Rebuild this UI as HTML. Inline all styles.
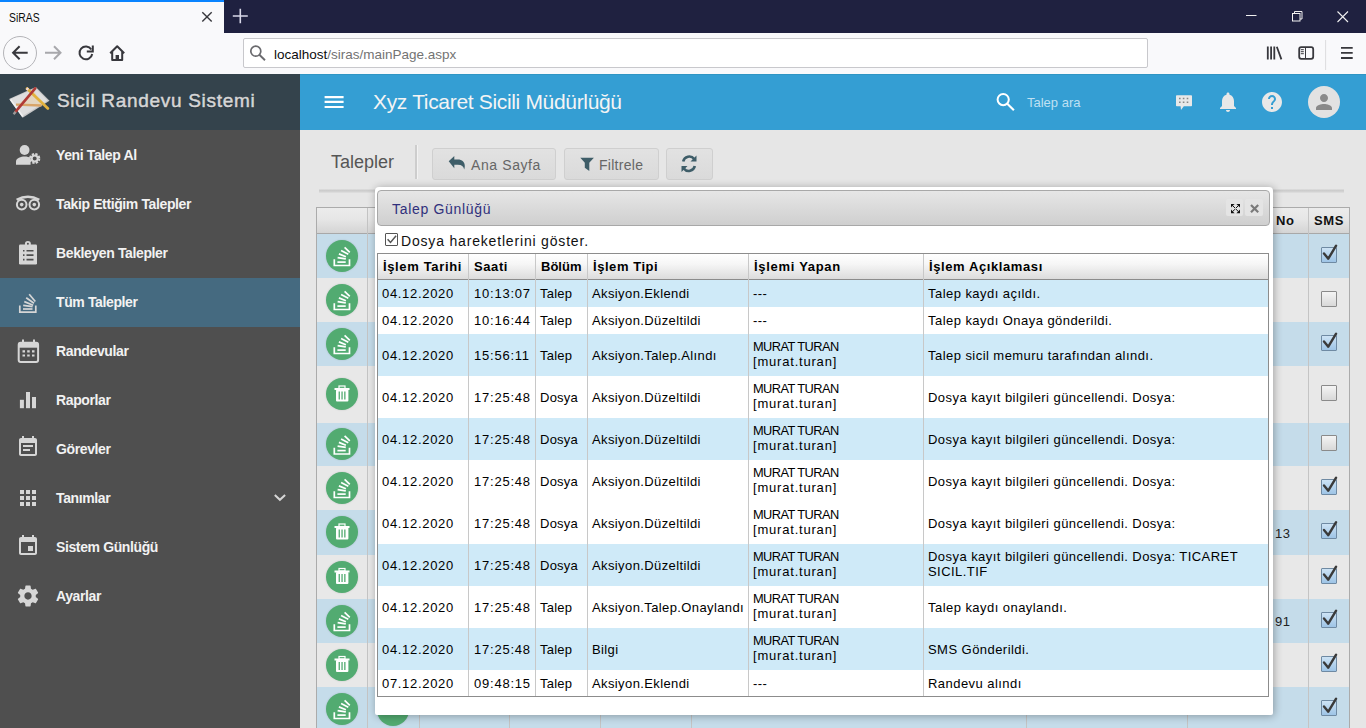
<!DOCTYPE html>
<html><head><meta charset="utf-8">
<style>
*{box-sizing:border-box;margin:0;padding:0}
html,body{width:1366px;height:728px;overflow:hidden;background:#e6e6e6;font-family:"Liberation Sans",sans-serif}
.a{position:absolute}
svg{position:absolute;display:block;overflow:visible}
.nw{white-space:nowrap}
#tabbar{left:0;top:0;width:1366px;height:33px;background:#1f2140}
#tab{left:0;top:0;width:224px;height:33px;background:#f9f9fb}
#tabline{left:0;top:0;width:224px;height:2px;background:#0a84ff}
#toolbar{left:0;top:33px;width:1366px;height:41px;background:#f9f9fb}
#url{left:243px;top:38px;width:905px;height:30px;background:#fff;border:1px solid #c8c8cc;border-radius:2px}
#sbhead{left:0;top:74px;width:300px;height:56px;background:#34434c}
#sb{left:0;top:130px;width:300px;height:598px;background:#4f4f4f}
.mi{position:absolute;left:56px;font:bold 14px "Liberation Sans",sans-serif;color:#f2f2f2;letter-spacing:-0.38px;white-space:nowrap}
#top{left:300px;top:74px;width:1066px;height:56px;background:#349ed3;border-top:1px solid #2f95c4}
.btn{position:absolute;top:148px;height:32px;background:linear-gradient(#e2e2e2,#dadada);border:1px solid #cfcfcf;border-radius:3px}
.bt{position:absolute;top:157px;font-size:14px;color:#666;white-space:nowrap}
.col{position:absolute;width:1px;background:#c4c4c4}
.gc{position:absolute;width:32px;height:32px;border-radius:50%;background:#52ab71;box-shadow:0 0 2px rgba(0,0,0,.15)}
.cb{position:absolute;width:16px;height:16px;border:1px solid #8a8a8a;background:linear-gradient(#f4f4f4,#d8d8d8);border-radius:1px}
.cb.on{background:linear-gradient(#cde3f5,#9ec4e6);border-color:#6f8aa3}
#dlg{left:375px;top:187px;width:898px;height:528px;background:#fff;border-radius:4px 4px 2px 2px;box-shadow:1px 1px 8px rgba(0,0,0,.32)}
#dtitle{left:377px;top:190px;width:893px;height:36px;border:1px solid #a8a8a8;border-radius:4px;background:linear-gradient(#e6e6e6,#cfcfcf)}
.dc{position:absolute;display:flex;align-items:center;font-size:13px;line-height:15px;color:#000;letter-spacing:0.4px;white-space:nowrap}
.dh{position:absolute;top:254px;height:25px;display:flex;align-items:center;font:bold 13px "Liberation Sans",sans-serif;color:#000;letter-spacing:0.55px;white-space:nowrap}
</style></head><body>
<div id="tabbar" class="a"></div>
<div id="tab" class="a"></div>
<div id="tabline" class="a"></div>
<div class="a nw" style="left:9.3px;top:10.8px;font-size:12.5px;letter-spacing:0;color:#0c0c0d;transform:scaleX(0.83);transform-origin:0 0">SiRAS</div>
<div id="toolbar" class="a"></div>
<div id="url" class="a"></div>
<div class="a nw" style="left:274px;top:47px;font-size:13.5px;color:#0c0c0d">localhost<span style="color:#737373">/siras/mainPage.aspx</span></div>
<div id="sbhead" class="a"></div>
<div id="sb" class="a"></div>
<div class="a nw" style="left:57px;top:90px;font-size:19px;letter-spacing:0.7px;color:#d6d6d6;-webkit-text-stroke:0.5px #d6d6d6;text-shadow:0 1px 1px rgba(0,0,0,.35)">Sicil Randevu Sistemi</div>
<div class="a" style="left:0;top:278px;width:300px;height:49px;background:#456a80"></div>
<div class="mi" style="top:147px">Yeni Talep Al</div>
<div class="mi" style="top:196px">Takip Ettiğim Talepler</div>
<div class="mi" style="top:245px">Bekleyen Talepler</div>
<div class="mi" style="top:294px">Tüm Talepler</div>
<div class="mi" style="top:343px">Randevular</div>
<div class="mi" style="top:392px">Raporlar</div>
<div class="mi" style="top:441px">Görevler</div>
<div class="mi" style="top:490px">Tanımlar</div>
<div class="mi" style="top:539px">Sistem Günlüğü</div>
<div class="mi" style="top:588px">Ayarlar</div>
<div id="top" class="a"></div>
<div class="a nw" style="left:373px;top:90px;font-size:21px;letter-spacing:-0.33px;color:#f4f4f4">Xyz Ticaret Sicili Müdürlüğü</div>
<div class="a nw" style="left:1027px;top:95px;font-size:13px;color:#bfe0f2">Talep ara</div>
<div class="a" style="left:1308px;top:86px;width:32px;height:32px;border-radius:50%;background:#e2e2e2"></div>
<div class="a nw" style="left:331px;top:152px;font-size:18px;color:#555">Talepler</div>
<div class="a" style="left:415px;top:145px;width:3px;height:34px;background:#cdcdcd;border-right:1px solid #f2f2f2"></div>
<div class="btn" style="left:432px;width:124px"></div>
<div class="btn" style="left:564px;width:95px"></div>
<div class="btn" style="left:666px;width:47px"></div>
<div class="bt" style="left:471px;letter-spacing:0.6px">Ana Sayfa</div>
<div class="bt" style="left:599px;letter-spacing:0.28px">Filtrele</div>
<div class="a" style="left:319px;top:189px;width:1025px;height:4px;background:linear-gradient(#e0e0e0,#cbcbcb 40%,#d6d6d6 75%,#e2e2e2)"></div>
<div class="a" style="left:316px;top:207px;width:1034px;height:530px;border:1px solid #ababab;background:#e8e8e8"></div>
<div class="a" style="left:317px;top:208px;width:1032px;height:26px;background:linear-gradient(#ececec 0%,#e6e6e6 45%,#d4d4d4 100%);border-bottom:1px solid #a8a8a8"></div>
<div class="a" style="left:317px;top:234px;width:1032px;height:44px;background:#c5dcea"></div>
<div class="a" style="left:317px;top:322px;width:1032px;height:44px;background:#c5dcea"></div>
<div class="a" style="left:317px;top:423px;width:1032px;height:43px;background:#c5dcea"></div>
<div class="a" style="left:317px;top:510px;width:1032px;height:45px;background:#c5dcea"></div>
<div class="a" style="left:317px;top:599px;width:1032px;height:44px;background:#c5dcea"></div>
<div class="a" style="left:317px;top:687px;width:1032px;height:44px;background:#c5dcea"></div>
<div class="col" style="left:367px;top:208px;height:520px"></div>
<div class="col" style="left:419px;top:208px;height:520px"></div>
<div class="col" style="left:509px;top:208px;height:520px"></div>
<div class="col" style="left:600px;top:208px;height:520px"></div>
<div class="col" style="left:691px;top:208px;height:520px"></div>
<div class="col" style="left:1026px;top:208px;height:520px"></div>
<div class="col" style="left:1187px;top:208px;height:520px"></div>
<div class="col" style="left:1308px;top:208px;height:520px"></div>
<div class="gc" style="left:326px;top:240px"></div>
<div class="cb on" style="left:1321px;top:247px"></div>
<div class="gc" style="left:326px;top:284px"></div>
<div class="cb" style="left:1321px;top:291px"></div>
<div class="gc" style="left:326px;top:328px"></div>
<div class="cb on" style="left:1321px;top:335px"></div>
<div class="gc" style="left:326px;top:378px"></div>
<div class="cb" style="left:1321px;top:385px"></div>
<div class="gc" style="left:326px;top:428px"></div>
<div class="cb" style="left:1321px;top:435px"></div>
<div class="gc" style="left:326px;top:472px"></div>
<div class="cb on" style="left:1321px;top:479px"></div>
<div class="gc" style="left:326px;top:516px"></div>
<div class="cb on" style="left:1321px;top:523px"></div>
<div class="gc" style="left:326px;top:561px"></div>
<div class="cb on" style="left:1321px;top:568px"></div>
<div class="gc" style="left:326px;top:605px"></div>
<div class="cb on" style="left:1321px;top:612px"></div>
<div class="gc" style="left:326px;top:649px"></div>
<div class="cb on" style="left:1321px;top:656px"></div>
<div class="gc" style="left:326px;top:693px"></div>
<div class="cb on" style="left:1321px;top:700px"></div>
<div class="gc" style="left:377px;top:694px"></div>
<div class="a nw" style="left:1276px;top:213px;font:bold 13px Liberation Sans;color:#111;letter-spacing:0.5px">No</div>
<div class="a nw" style="left:1314px;top:213px;font:bold 13px Liberation Sans;color:#111;letter-spacing:0.6px">SMS</div>
<div class="a nw" style="left:1275px;top:526px;font-size:13px;color:#222;letter-spacing:0.6px">13</div>
<div class="a nw" style="left:1275px;top:614px;font-size:13px;color:#222;letter-spacing:0.6px">91</div>
<svg class="a" style="left:0;top:0" width="1366" height="728"><path d="M202.3 12.2l9.4 9.4M211.7 12.2l-9.4 9.4" stroke="#38383d" stroke-width="1.4"/><path d="M232.8 16h15M240.3 8.8v14.5" stroke="#d8d8e8" stroke-width="1.6"/><path d="M1246 15.5h10.5" stroke="#f0f0f0" stroke-width="1"/><rect x="1292.5" y="13.5" width="7.5" height="7.5" fill="none" stroke="#f0f0f0" stroke-width="1"/><path d="M1294.5 13.5v-2h7.5v7.5h-2" fill="none" stroke="#f0f0f0" stroke-width="1"/><path d="M1337.5 11.5l10.5 10.5M1348 11.5l-10.5 10.5" stroke="#f0f0f0" stroke-width="1.1"/><circle cx="20" cy="53" r="16.5" fill="#f9f9fb" stroke="#b4b4b8" stroke-width="1"/><path d="M27.7 52.8H13M19.6 46.3l-6.5 6.5 6.5 6.5" fill="none" stroke="#38383d" stroke-width="2"/><path d="M45 52.8h15.5M54 46.3l6.5 6.5-6.5 6.5" fill="none" stroke="#a8a8ac" stroke-width="2"/><path d="M91.3 49.5A6.4 6.4 0 1 0 92.2 54" fill="none" stroke="#38383d" stroke-width="2"/><path d="M92.8 45.5v6h-6" fill="none" stroke="#38383d" stroke-width="2"/><path d="M110.2 53.2l7-7 7 7M112.2 51.6v8.3h10v-8.3" fill="none" stroke="#38383d" stroke-width="2" stroke-linejoin="round"/><rect x="115.6" y="55" width="3.4" height="5" fill="#38383d"/><circle cx="255.8" cy="51.2" r="5" fill="none" stroke="#6a6a6e" stroke-width="1.7"/><path d="M259.4 54.8l5.6 5.4" stroke="#6a6a6e" stroke-width="1.9"/><path d="M1267.8 46.6v12.8M1271.1 46.6v12.8M1274.3 46.6v12.8M1276.8 46.8l4.6 12.6" stroke="#38383d" stroke-width="1.8"/><rect x="1299.2" y="47.2" width="14" height="11.6" rx="2" fill="none" stroke="#38383d" stroke-width="1.8"/><path d="M1305.5 47.5v11M1300.8 49.7h3M1300.8 51.7h3M1300.8 53.7h3" stroke="#38383d" stroke-width="1"/><path d="M1325.6 40v30" stroke="#dcdcde" stroke-width="1"/><path d="M1341 47.8h11.7M1341 52.9h11.7M1341 58h11.7" stroke="#38383d" stroke-width="1.8"/><polygon points="9.1,99 35.8,87 49.5,100.7 22.6,117.7" fill="#c8c8c8"/><polygon points="10.5,99 35.6,88.2 47.6,100.6 23,115.8" fill="#dedede"/><path d="M10.5 99.5L22.8 116.5" stroke="#f2f2f2" stroke-width="1.6"/><polygon points="18,104 34.5,91.5 41.5,105" fill="#e9cfa8" opacity="0.55"/><path d="M16 104.6l25.5 0.9" stroke="#d8a468" stroke-width="2.4"/><path d="M27 88.6l20.9 19.8" stroke="#e2b23e" stroke-width="2.8" stroke-linecap="round"/><path d="M26.6 88.2l1.6 1.5" stroke="#f0d8d8" stroke-width="2.6"/><path d="M15.2 112.2L35.2 88.3" stroke="#b03a36" stroke-width="2.6" stroke-linecap="round"/><path d="M13.6 114.2l2-2.4" stroke="#9a9a9a" stroke-width="2.4"/><circle cx="24.6" cy="150" r="4.9" fill="#d6d6d6"/><path d="M16 164.7v-3.5c0-3 5-4.7 8.6-4.7 2.5 0 4.6.6 6 1.4v6.8z" fill="#d6d6d6"/><g transform="translate(34.7 158.5)"><circle r="4" fill="none" stroke="#d6d6d6" stroke-width="3.2" stroke-dasharray="2 1.15"/><circle r="3" fill="none" stroke="#d6d6d6" stroke-width="2"/></g><path d="M16.6 199.8Q27.9 193.6 39.3 199.8" fill="none" stroke="#d6d6d6" stroke-width="2.4"/><path d="M25.3 198.9l2.6 3.4 2.6-3.4z" fill="#4f4f4f"/><circle cx="21.7" cy="204.6" r="4.8" fill="none" stroke="#d6d6d6" stroke-width="2"/><circle cx="34.3" cy="204.6" r="4.8" fill="none" stroke="#d6d6d6" stroke-width="2"/><circle cx="21.7" cy="204.6" r="1.8" fill="#d6d6d6"/><circle cx="34.3" cy="204.6" r="1.8" fill="#d6d6d6"/><rect x="19" y="244.5" width="18" height="20" rx="1.2" fill="#d6d6d6"/><circle cx="27.9" cy="244" r="3" fill="#d6d6d6"/><circle cx="27.9" cy="243.8" r="1" fill="#4f4f4f"/><path d="M23 250.8h1.5M26.5 250.8h7M23 255.1h1.5M26.5 255.1h7M23 259.6h1.5M26.5 259.6h7" stroke="#4f4f4f" stroke-width="1.6"/><g fill="none" stroke="#d6d6d6" stroke-width="1.7"><path d="M19.8 305.5v6.6h16v-6.6"/><path d="M23 309h9.5"/><path d="M23.2 305.4l9.4 1.3"/><path d="M24.3 301.6l8.9 3.6"/><path d="M26.2 297.8l7.8 5.4"/><path d="M29.2 294.3l6.1 7.2"/></g><rect x="18.7" y="342.7" width="19.4" height="19.4" rx="2" fill="none" stroke="#d6d6d6" stroke-width="2"/><rect x="18.7" y="342.7" width="19.4" height="5" fill="#d6d6d6"/><path d="M23 339.4v4.5M34 339.4v4.5" stroke="#d6d6d6" stroke-width="2"/><path d="M22.5 351.3h2.5M27.2 351.3h2.5M32 351.3h2.5M22.5 355.5h2.5M27.2 355.5h2.5M32 355.5h2.5" stroke="#d6d6d6" stroke-width="2.2"/><rect x="19.9" y="399.8" width="4" height="8.4" fill="#d6d6d6"/><rect x="26" y="392" width="4" height="16.2" fill="#d6d6d6"/><rect x="32" y="397" width="4" height="11.2" fill="#d6d6d6"/><svg x="16" y="435" width="24" height="24" viewBox="0 0 24 24"><path fill="#d6d6d6" d="M17 10H7v2h10v-2zm2-7h-1V1h-2v2H8V1H6v2H5c-1.11 0-1.99.9-1.99 2L3 19c0 1.1.89 2 2 2h14c1.1 0 2-.9 2-2V5c0-1.1-.9-2-2-2zm0 16H5V8h14v11zm-5-5H7v2h7v-2z"/></svg><svg x="16" y="486" width="24" height="24" viewBox="0 0 24 24"><path fill="#d6d6d6" d="M4 8h4V4H4v4zm6 12h4v-4h-4v4zm-6 0h4v-4H4v4zm0-6h4v-4H4v4zm6 0h4v-4h-4v4zm6-10v4h4V4h-4zm-6 4h4V4h-4v4zm6 6h4v-4h-4v4zm0 6h4v-4h-4v4z"/></svg><path d="M274.8 495l5.1 4.8 5.2-4.8" fill="none" stroke="#d6d6d6" stroke-width="2"/><svg x="16" y="534" width="24" height="24" viewBox="0 0 24 24"><path fill="#d6d6d6" d="M17 12h-5v5h5v-5zM16 1v2H8V1H6v2H5c-1.11 0-1.99.9-1.99 2L3 19c0 1.1.89 2 2 2h14c1.1 0 2-.9 2-2V5c0-1.1-.9-2-2-2h-1V1h-2zm3 18H5V8h14v11z"/></svg><svg x="15.5" y="583.5" width="25" height="25" viewBox="0 0 24 24"><path fill="#d6d6d6" d="M19.43 12.98c.04-.32.07-.64.07-.98s-.03-.66-.07-.98l2.11-1.65c.19-.15.24-.42.12-.64l-2-3.46c-.12-.22-.39-.3-.61-.22l-2.49 1c-.52-.4-1.08-.73-1.69-.98l-.38-2.65C14.46 2.18 14.25 2 14 2h-4c-.25 0-.46.18-.49.42l-.38 2.65c-.61.25-1.170.59-1.69.98l-2.49-1c-.23-.09-.49 0-.61.22l-2 3.46c-.13.22-.07.49.12.64l2.11 1.65c-.04.32-.07.65-.07.98s.03.66.07.98l-2.11 1.65c-.19.15-.24.42-.12.64l2 3.46c.12.22.39.3.61.22l2.49-1c.52.4 1.08.73 1.69.98l.38 2.65c.03.24.24.42.49.42h4c.25 0 .46-.18.49-.42l.38-2.65c.61-.25 1.17-.59 1.69-.98l2.49 1c.23.09.49 0 .61-.22l2-3.46c.12-.22.07-.49-.12-.64l-2.11-1.65zM12 15.5c-1.93 0-3.5-1.57-3.5-3.5s1.57-3.5 3.5-3.5 3.5 1.57 3.5 3.5-1.57 3.5-3.5 3.5z"/></svg><path d="M324.6 97.1h19M324.6 101.9h19M324.6 107h19" stroke="#fff" stroke-width="2.2"/><circle cx="1003.2" cy="99.6" r="5.6" fill="none" stroke="#fff" stroke-width="2"/><path d="M1007.3 103.8l6.6 6.4" stroke="#fff" stroke-width="2.2"/><path d="M1176.8 95.3h14.4a.8.8 0 0 1 .8.8v9.3a.8.8 0 0 1-.8.8h-7.4l-2.8 3.8-0.4-3.8h-3.8a.8.8 0 0 1-.8-.8v-9.3a.8.8 0 0 1 .8-.8z" fill="#e8e8e8"/><path d="M1179 98.6h1.6M1182.8 98.6h1.6M1186.7 98.6h1.6M1179 102.2h1.6M1182.8 102.2h1.6M1186.7 102.2h1.6" stroke="#888" stroke-width="1.5"/><svg x="1216" y="90" width="24" height="24" viewBox="0 0 24 24"><path fill="#e8e8e8" d="M12 22c1.1 0 2-.9 2-2h-4c0 1.1.89 2 2 2zm6-6v-5c0-3.07-1.64-5.64-4.5-6.32V4c0-.83-.67-1.5-1.5-1.5s-1.5.67-1.5 1.5v.68C7.63 5.36 6 7.92 6 11v5l-2 2v1h16v-1l-2-2z"/></svg><svg x="1260" y="90" width="24" height="24" viewBox="0 0 24 24"><path fill="#e8e8e8" d="M12 2C6.48 2 2 6.48 2 12s4.48 10 10 10 10-4.48 10-10S17.52 2 12 2zm1 17h-2v-2h2v2zm2.07-7.75l-.9.92C13.45 12.9 13 13.5 13 15h-2v-.5c0-1.1.45-2.1 1.17-2.83l1.24-1.26c.37-.36.59-.86.59-1.41 0-1.1-.9-2-2-2s-2 .9-2 2H8c0-2.21 1.79-4 4-4s4 1.79 4 4c0 .88-.36 1.68-.93 2.250z"/></svg><svg x="1312" y="90" width="24" height="24" viewBox="0 0 24 24"><path fill="#8a8a8a" d="M12 12c2.21 0 4-1.79 4-4s-1.79-4-4-4-4 1.79-4 4 1.79 4 4 4zm0 2c-2.67 0-8 1.34-8 4v2h16v-2c0-2.66-5.33-4-8-4z"/></svg><path d="M448.7 161.3l5.6-5.2v3.3h3.5c4.3 0 7 2.6 7 6.5 0 1.3-.2 2.4-.6 3.5-.5-2.8-2.5-4.6-6.4-4.6h-3.5v3.4z" fill="#3e5d68"/><path d="M580.3 157.8h13.6l-4.6 5v8.2l-4.5-3.2v-5z" fill="#3e5d68"/><g fill="none" stroke="#3e5d68" stroke-width="2.6"><path d="M683.2 161.5a6.2 6.2 0 0 1 11-2.5"/><path d="M694.8 166a6.2 6.2 0 0 1-11 2.5"/></g><path d="M696.5 155.5v6h-6z" fill="#3e5d68"/><path d="M681.5 172v-6h6z" fill="#3e5d68"/><g transform="translate(0,0.0)" fill="none" stroke="#fff" stroke-width="1.7">
<path d="M334.3 259.2v6.3h15.2v-6.3" />
<path d="M337.4 262.1h8.3" />
<path d="M337.6 257.6l8.2 1.3" />
<path d="M338.9 253.9l7 2.9" />
<path d="M341.1 250.6l7.2 3.6" />
<path d="M344.6 247.4l5.2 5" />
</g><path d="M1324 253.5l4.3 5.2 7.8-13" fill="none" stroke="#3a3a3a" stroke-width="2.4" stroke-linecap="round" stroke-linejoin="round"/><g transform="translate(0,44.0)" fill="none" stroke="#fff" stroke-width="1.7">
<path d="M334.3 259.2v6.3h15.2v-6.3" />
<path d="M337.4 262.1h8.3" />
<path d="M337.6 257.6l8.2 1.3" />
<path d="M338.9 253.9l7 2.9" />
<path d="M341.1 250.6l7.2 3.6" />
<path d="M344.6 247.4l5.2 5" />
</g><g transform="translate(0,88.0)" fill="none" stroke="#fff" stroke-width="1.7">
<path d="M334.3 259.2v6.3h15.2v-6.3" />
<path d="M337.4 262.1h8.3" />
<path d="M337.6 257.6l8.2 1.3" />
<path d="M338.9 253.9l7 2.9" />
<path d="M341.1 250.6l7.2 3.6" />
<path d="M344.6 247.4l5.2 5" />
</g><path d="M1324 341.5l4.3 5.2 7.8-13" fill="none" stroke="#3a3a3a" stroke-width="2.4" stroke-linecap="round" stroke-linejoin="round"/><g transform="translate(0,-1.5)">
<rect x="334.5" y="389.5" width="15" height="2" fill="#fff"/>
<rect x="339" y="387.5" width="6" height="2.5" fill="none" stroke="#fff" stroke-width="1.2"/>
<rect x="336" y="391" width="12.4" height="12" rx="1" fill="#fff"/>
<rect x="338.6" y="393" width="1.3" height="8" fill="#52ab71"/>
<rect x="341.4" y="393" width="1.3" height="8" fill="#52ab71"/>
<rect x="344.2" y="393" width="1.3" height="8" fill="#52ab71"/>
</g><g transform="translate(0,188.5)" fill="none" stroke="#fff" stroke-width="1.7">
<path d="M334.3 259.2v6.3h15.2v-6.3" />
<path d="M337.4 262.1h8.3" />
<path d="M337.6 257.6l8.2 1.3" />
<path d="M338.9 253.9l7 2.9" />
<path d="M341.1 250.6l7.2 3.6" />
<path d="M344.6 247.4l5.2 5" />
</g><g transform="translate(0,232.0)" fill="none" stroke="#fff" stroke-width="1.7">
<path d="M334.3 259.2v6.3h15.2v-6.3" />
<path d="M337.4 262.1h8.3" />
<path d="M337.6 257.6l8.2 1.3" />
<path d="M338.9 253.9l7 2.9" />
<path d="M341.1 250.6l7.2 3.6" />
<path d="M344.6 247.4l5.2 5" />
</g><path d="M1324 485.5l4.3 5.2 7.8-13" fill="none" stroke="#3a3a3a" stroke-width="2.4" stroke-linecap="round" stroke-linejoin="round"/><g transform="translate(0,136.5)">
<rect x="334.5" y="389.5" width="15" height="2" fill="#fff"/>
<rect x="339" y="387.5" width="6" height="2.5" fill="none" stroke="#fff" stroke-width="1.2"/>
<rect x="336" y="391" width="12.4" height="12" rx="1" fill="#fff"/>
<rect x="338.6" y="393" width="1.3" height="8" fill="#52ab71"/>
<rect x="341.4" y="393" width="1.3" height="8" fill="#52ab71"/>
<rect x="344.2" y="393" width="1.3" height="8" fill="#52ab71"/>
</g><path d="M1324 530.0l4.3 5.2 7.8-13" fill="none" stroke="#3a3a3a" stroke-width="2.4" stroke-linecap="round" stroke-linejoin="round"/><g transform="translate(0,181.0)">
<rect x="334.5" y="389.5" width="15" height="2" fill="#fff"/>
<rect x="339" y="387.5" width="6" height="2.5" fill="none" stroke="#fff" stroke-width="1.2"/>
<rect x="336" y="391" width="12.4" height="12" rx="1" fill="#fff"/>
<rect x="338.6" y="393" width="1.3" height="8" fill="#52ab71"/>
<rect x="341.4" y="393" width="1.3" height="8" fill="#52ab71"/>
<rect x="344.2" y="393" width="1.3" height="8" fill="#52ab71"/>
</g><path d="M1324 574.5l4.3 5.2 7.8-13" fill="none" stroke="#3a3a3a" stroke-width="2.4" stroke-linecap="round" stroke-linejoin="round"/><g transform="translate(0,365.0)" fill="none" stroke="#fff" stroke-width="1.7">
<path d="M334.3 259.2v6.3h15.2v-6.3" />
<path d="M337.4 262.1h8.3" />
<path d="M337.6 257.6l8.2 1.3" />
<path d="M338.9 253.9l7 2.9" />
<path d="M341.1 250.6l7.2 3.6" />
<path d="M344.6 247.4l5.2 5" />
</g><path d="M1324 618.5l4.3 5.2 7.8-13" fill="none" stroke="#3a3a3a" stroke-width="2.4" stroke-linecap="round" stroke-linejoin="round"/><g transform="translate(0,269.0)">
<rect x="334.5" y="389.5" width="15" height="2" fill="#fff"/>
<rect x="339" y="387.5" width="6" height="2.5" fill="none" stroke="#fff" stroke-width="1.2"/>
<rect x="336" y="391" width="12.4" height="12" rx="1" fill="#fff"/>
<rect x="338.6" y="393" width="1.3" height="8" fill="#52ab71"/>
<rect x="341.4" y="393" width="1.3" height="8" fill="#52ab71"/>
<rect x="344.2" y="393" width="1.3" height="8" fill="#52ab71"/>
</g><path d="M1324 662.5l4.3 5.2 7.8-13" fill="none" stroke="#3a3a3a" stroke-width="2.4" stroke-linecap="round" stroke-linejoin="round"/><g transform="translate(0,453.0)" fill="none" stroke="#fff" stroke-width="1.7">
<path d="M334.3 259.2v6.3h15.2v-6.3" />
<path d="M337.4 262.1h8.3" />
<path d="M337.6 257.6l8.2 1.3" />
<path d="M338.9 253.9l7 2.9" />
<path d="M341.1 250.6l7.2 3.6" />
<path d="M344.6 247.4l5.2 5" />
</g><path d="M1324 706.5l4.3 5.2 7.8-13" fill="none" stroke="#3a3a3a" stroke-width="2.4" stroke-linecap="round" stroke-linejoin="round"/></svg>
<div id="dlg" class="a"></div>
<div id="dtitle" class="a"></div>
<div class="a nw" style="left:392px;top:201px;font-size:14px;letter-spacing:0.68px;color:#30307c">Talep Günlüğü</div>
<div class="a" style="left:1226px;top:199px;width:17px;height:17px;background:#e4e4e4;border-radius:2px"></div>
<div class="a" style="left:1245px;top:199px;width:18px;height:17px;background:#e4e4e4;border-radius:2px"></div>
<div class="cb" style="left:385px;top:233px;width:13px;height:13px;background:#fff;border-color:#555"></div>
<div class="a nw" style="left:401px;top:232.5px;font-size:14px;letter-spacing:0.82px;color:#111">Dosya hareketlerini göster.</div>
<div class="a" style="left:377px;top:253px;width:892px;height:444px;border:1px solid #8c8c8c;background:#fff"></div>
<div class="a" style="left:378px;top:254px;width:890px;height:26px;background:linear-gradient(#ffffff 0%,#f6f6f6 40%,#dcdcdc 100%);border-bottom:1px solid #8c8c8c"></div>
<div class="a" style="left:378px;top:280px;width:890px;height:27px;background:#cfeaf8"></div>
<div class="a" style="left:378px;top:334px;width:890px;height:42px;background:#cfeaf8"></div>
<div class="a" style="left:378px;top:418px;width:890px;height:42px;background:#cfeaf8"></div>
<div class="a" style="left:378px;top:544px;width:890px;height:42px;background:#cfeaf8"></div>
<div class="a" style="left:378px;top:628px;width:890px;height:42px;background:#cfeaf8"></div>
<div class="col" style="left:468px;top:254px;height:442px;background:#c8c8c8"></div>
<div class="col" style="left:535px;top:254px;height:442px;background:#c8c8c8"></div>
<div class="col" style="left:587px;top:254px;height:442px;background:#c8c8c8"></div>
<div class="col" style="left:748px;top:254px;height:442px;background:#c8c8c8"></div>
<div class="col" style="left:923px;top:254px;height:442px;background:#c8c8c8"></div>
<div class="dh" style="left:383px;letter-spacing:0.64px">İşlem Tarihi</div>
<div class="dh" style="left:474px;letter-spacing:0.6px">Saati</div>
<div class="dh" style="left:541px;letter-spacing:0.0px">Bölüm</div>
<div class="dh" style="left:593px;letter-spacing:0.55px">İşlem Tipi</div>
<div class="dh" style="left:754px;letter-spacing:0.7px">İşlemi Yapan</div>
<div class="dh" style="left:929px;letter-spacing:0.6px">İşlem Açıklaması</div>
<div class="dc" style="left:382px;top:280px;height:27px;letter-spacing:0.68px"><div>04.12.2020</div></div>
<div class="dc" style="left:474px;top:280px;height:27px;letter-spacing:0.77px"><div>10:13:07</div></div>
<div class="dc" style="left:540px;top:280px;height:27px;letter-spacing:0.25px"><div>Talep</div></div>
<div class="dc" style="left:592px;top:280px;height:27px;letter-spacing:0.39px"><div>Aksiyon.Eklendi</div></div>
<div class="dc" style="left:753px;top:280px;height:27px;letter-spacing:0.4px"><div>---</div></div>
<div class="dc" style="left:928px;top:280px;height:27px;letter-spacing:0.45px"><div>Talep kaydı açıldı.</div></div>
<div class="dc" style="left:382px;top:307px;height:27px;letter-spacing:0.68px"><div>04.12.2020</div></div>
<div class="dc" style="left:474px;top:307px;height:27px;letter-spacing:0.77px"><div>10:16:44</div></div>
<div class="dc" style="left:540px;top:307px;height:27px;letter-spacing:0.25px"><div>Talep</div></div>
<div class="dc" style="left:592px;top:307px;height:27px;letter-spacing:0.39px"><div>Aksiyon.Düzeltildi</div></div>
<div class="dc" style="left:753px;top:307px;height:27px;letter-spacing:0.4px"><div>---</div></div>
<div class="dc" style="left:928px;top:307px;height:27px;letter-spacing:0.45px"><div>Talep kaydı Onaya gönderildi.</div></div>
<div class="dc" style="left:382px;top:334px;height:42px;letter-spacing:0.68px"><div>04.12.2020</div></div>
<div class="dc" style="left:474px;top:334px;height:42px;letter-spacing:0.77px"><div>15:56:11</div></div>
<div class="dc" style="left:540px;top:334px;height:42px;letter-spacing:0.25px"><div>Talep</div></div>
<div class="dc" style="left:592px;top:334px;height:42px;letter-spacing:0.39px"><div>Aksiyon.Talep.Alındı</div></div>
<div class="dc" style="left:753px;top:334px;height:42px;letter-spacing:0.4px"><div><div style="line-height:14.6px"><span style="letter-spacing:-0.55px;font-size:12.8px">MURAT TURAN</span><br><span style="letter-spacing:0.8px">[murat.turan]</span></div></div></div>
<div class="dc" style="left:928px;top:334px;height:42px;letter-spacing:0.45px"><div>Talep sicil memuru tarafından alındı.</div></div>
<div class="dc" style="left:382px;top:376px;height:42px;letter-spacing:0.68px"><div>04.12.2020</div></div>
<div class="dc" style="left:474px;top:376px;height:42px;letter-spacing:0.77px"><div>17:25:48</div></div>
<div class="dc" style="left:540px;top:376px;height:42px;letter-spacing:0.25px"><div>Dosya</div></div>
<div class="dc" style="left:592px;top:376px;height:42px;letter-spacing:0.39px"><div>Aksiyon.Düzeltildi</div></div>
<div class="dc" style="left:753px;top:376px;height:42px;letter-spacing:0.4px"><div><div style="line-height:14.6px"><span style="letter-spacing:-0.55px;font-size:12.8px">MURAT TURAN</span><br><span style="letter-spacing:0.8px">[murat.turan]</span></div></div></div>
<div class="dc" style="left:928px;top:376px;height:42px;letter-spacing:0.45px"><div>Dosya kayıt bilgileri güncellendi. Dosya:</div></div>
<div class="dc" style="left:382px;top:418px;height:42px;letter-spacing:0.68px"><div>04.12.2020</div></div>
<div class="dc" style="left:474px;top:418px;height:42px;letter-spacing:0.77px"><div>17:25:48</div></div>
<div class="dc" style="left:540px;top:418px;height:42px;letter-spacing:0.25px"><div>Dosya</div></div>
<div class="dc" style="left:592px;top:418px;height:42px;letter-spacing:0.39px"><div>Aksiyon.Düzeltildi</div></div>
<div class="dc" style="left:753px;top:418px;height:42px;letter-spacing:0.4px"><div><div style="line-height:14.6px"><span style="letter-spacing:-0.55px;font-size:12.8px">MURAT TURAN</span><br><span style="letter-spacing:0.8px">[murat.turan]</span></div></div></div>
<div class="dc" style="left:928px;top:418px;height:42px;letter-spacing:0.45px"><div>Dosya kayıt bilgileri güncellendi. Dosya:</div></div>
<div class="dc" style="left:382px;top:460px;height:42px;letter-spacing:0.68px"><div>04.12.2020</div></div>
<div class="dc" style="left:474px;top:460px;height:42px;letter-spacing:0.77px"><div>17:25:48</div></div>
<div class="dc" style="left:540px;top:460px;height:42px;letter-spacing:0.25px"><div>Dosya</div></div>
<div class="dc" style="left:592px;top:460px;height:42px;letter-spacing:0.39px"><div>Aksiyon.Düzeltildi</div></div>
<div class="dc" style="left:753px;top:460px;height:42px;letter-spacing:0.4px"><div><div style="line-height:14.6px"><span style="letter-spacing:-0.55px;font-size:12.8px">MURAT TURAN</span><br><span style="letter-spacing:0.8px">[murat.turan]</span></div></div></div>
<div class="dc" style="left:928px;top:460px;height:42px;letter-spacing:0.45px"><div>Dosya kayıt bilgileri güncellendi. Dosya:</div></div>
<div class="dc" style="left:382px;top:502px;height:42px;letter-spacing:0.68px"><div>04.12.2020</div></div>
<div class="dc" style="left:474px;top:502px;height:42px;letter-spacing:0.77px"><div>17:25:48</div></div>
<div class="dc" style="left:540px;top:502px;height:42px;letter-spacing:0.25px"><div>Dosya</div></div>
<div class="dc" style="left:592px;top:502px;height:42px;letter-spacing:0.39px"><div>Aksiyon.Düzeltildi</div></div>
<div class="dc" style="left:753px;top:502px;height:42px;letter-spacing:0.4px"><div><div style="line-height:14.6px"><span style="letter-spacing:-0.55px;font-size:12.8px">MURAT TURAN</span><br><span style="letter-spacing:0.8px">[murat.turan]</span></div></div></div>
<div class="dc" style="left:928px;top:502px;height:42px;letter-spacing:0.45px"><div>Dosya kayıt bilgileri güncellendi. Dosya:</div></div>
<div class="dc" style="left:382px;top:544px;height:42px;letter-spacing:0.68px"><div>04.12.2020</div></div>
<div class="dc" style="left:474px;top:544px;height:42px;letter-spacing:0.77px"><div>17:25:48</div></div>
<div class="dc" style="left:540px;top:544px;height:42px;letter-spacing:0.25px"><div>Dosya</div></div>
<div class="dc" style="left:592px;top:544px;height:42px;letter-spacing:0.39px"><div>Aksiyon.Düzeltildi</div></div>
<div class="dc" style="left:753px;top:544px;height:42px;letter-spacing:0.4px"><div><div style="line-height:14.6px"><span style="letter-spacing:-0.55px;font-size:12.8px">MURAT TURAN</span><br><span style="letter-spacing:0.8px">[murat.turan]</span></div></div></div>
<div class="dc" style="left:928px;top:544px;height:42px;letter-spacing:0.45px"><div><div style="line-height:14.6px">Dosya kayıt bilgileri güncellendi. Dosya: TICARET<br>SICIL.TIF</div></div></div>
<div class="dc" style="left:382px;top:586px;height:42px;letter-spacing:0.68px"><div>04.12.2020</div></div>
<div class="dc" style="left:474px;top:586px;height:42px;letter-spacing:0.77px"><div>17:25:48</div></div>
<div class="dc" style="left:540px;top:586px;height:42px;letter-spacing:0.25px"><div>Talep</div></div>
<div class="dc" style="left:592px;top:586px;height:42px;letter-spacing:0.39px"><div>Aksiyon.Talep.Onaylandı</div></div>
<div class="dc" style="left:753px;top:586px;height:42px;letter-spacing:0.4px"><div><div style="line-height:14.6px"><span style="letter-spacing:-0.55px;font-size:12.8px">MURAT TURAN</span><br><span style="letter-spacing:0.8px">[murat.turan]</span></div></div></div>
<div class="dc" style="left:928px;top:586px;height:42px;letter-spacing:0.45px"><div>Talep kaydı onaylandı.</div></div>
<div class="dc" style="left:382px;top:628px;height:42px;letter-spacing:0.68px"><div>04.12.2020</div></div>
<div class="dc" style="left:474px;top:628px;height:42px;letter-spacing:0.77px"><div>17:25:48</div></div>
<div class="dc" style="left:540px;top:628px;height:42px;letter-spacing:0.25px"><div>Talep</div></div>
<div class="dc" style="left:592px;top:628px;height:42px;letter-spacing:0.39px"><div>Bilgi</div></div>
<div class="dc" style="left:753px;top:628px;height:42px;letter-spacing:0.4px"><div><div style="line-height:14.6px"><span style="letter-spacing:-0.55px;font-size:12.8px">MURAT TURAN</span><br><span style="letter-spacing:0.8px">[murat.turan]</span></div></div></div>
<div class="dc" style="left:928px;top:628px;height:42px;letter-spacing:0.45px"><div>SMS Gönderildi.</div></div>
<div class="dc" style="left:382px;top:670px;height:26px;letter-spacing:0.68px"><div>07.12.2020</div></div>
<div class="dc" style="left:474px;top:670px;height:26px;letter-spacing:0.77px"><div>09:48:15</div></div>
<div class="dc" style="left:540px;top:670px;height:26px;letter-spacing:0.25px"><div>Talep</div></div>
<div class="dc" style="left:592px;top:670px;height:26px;letter-spacing:0.39px"><div>Aksiyon.Eklendi</div></div>
<div class="dc" style="left:753px;top:670px;height:26px;letter-spacing:0.4px"><div>---</div></div>
<div class="dc" style="left:928px;top:670px;height:26px;letter-spacing:0.45px"><div>Randevu alındı</div></div>
<svg class="a" style="left:0;top:0" width="1366" height="728"><g fill="#111" stroke="none"><path d="M1231 204h3.6l-3.6 3.6z"/><path d="M1240 204h-3.6l3.6 3.6z"/><path d="M1231 213.2h3.6l-3.6-3.6z"/><path d="M1240 213.2h-3.6l3.6-3.6z"/></g><path d="M1232.5 205.5l2.6 2.6M1238.5 205.5l-2.6 2.6M1232.5 211.7l2.6-2.6M1238.5 211.7l-2.6-2.6" stroke="#111" stroke-width="1"/><path d="M1251 205l7.2 7.2M1258.2 205l-7.2 7.2" stroke="#7a7a7a" stroke-width="2.2"/><path d="M387.6 239.2l2.9 3.2 5.6-6.6" fill="none" stroke="#555" stroke-width="1.5"/></svg>
</body></html>
